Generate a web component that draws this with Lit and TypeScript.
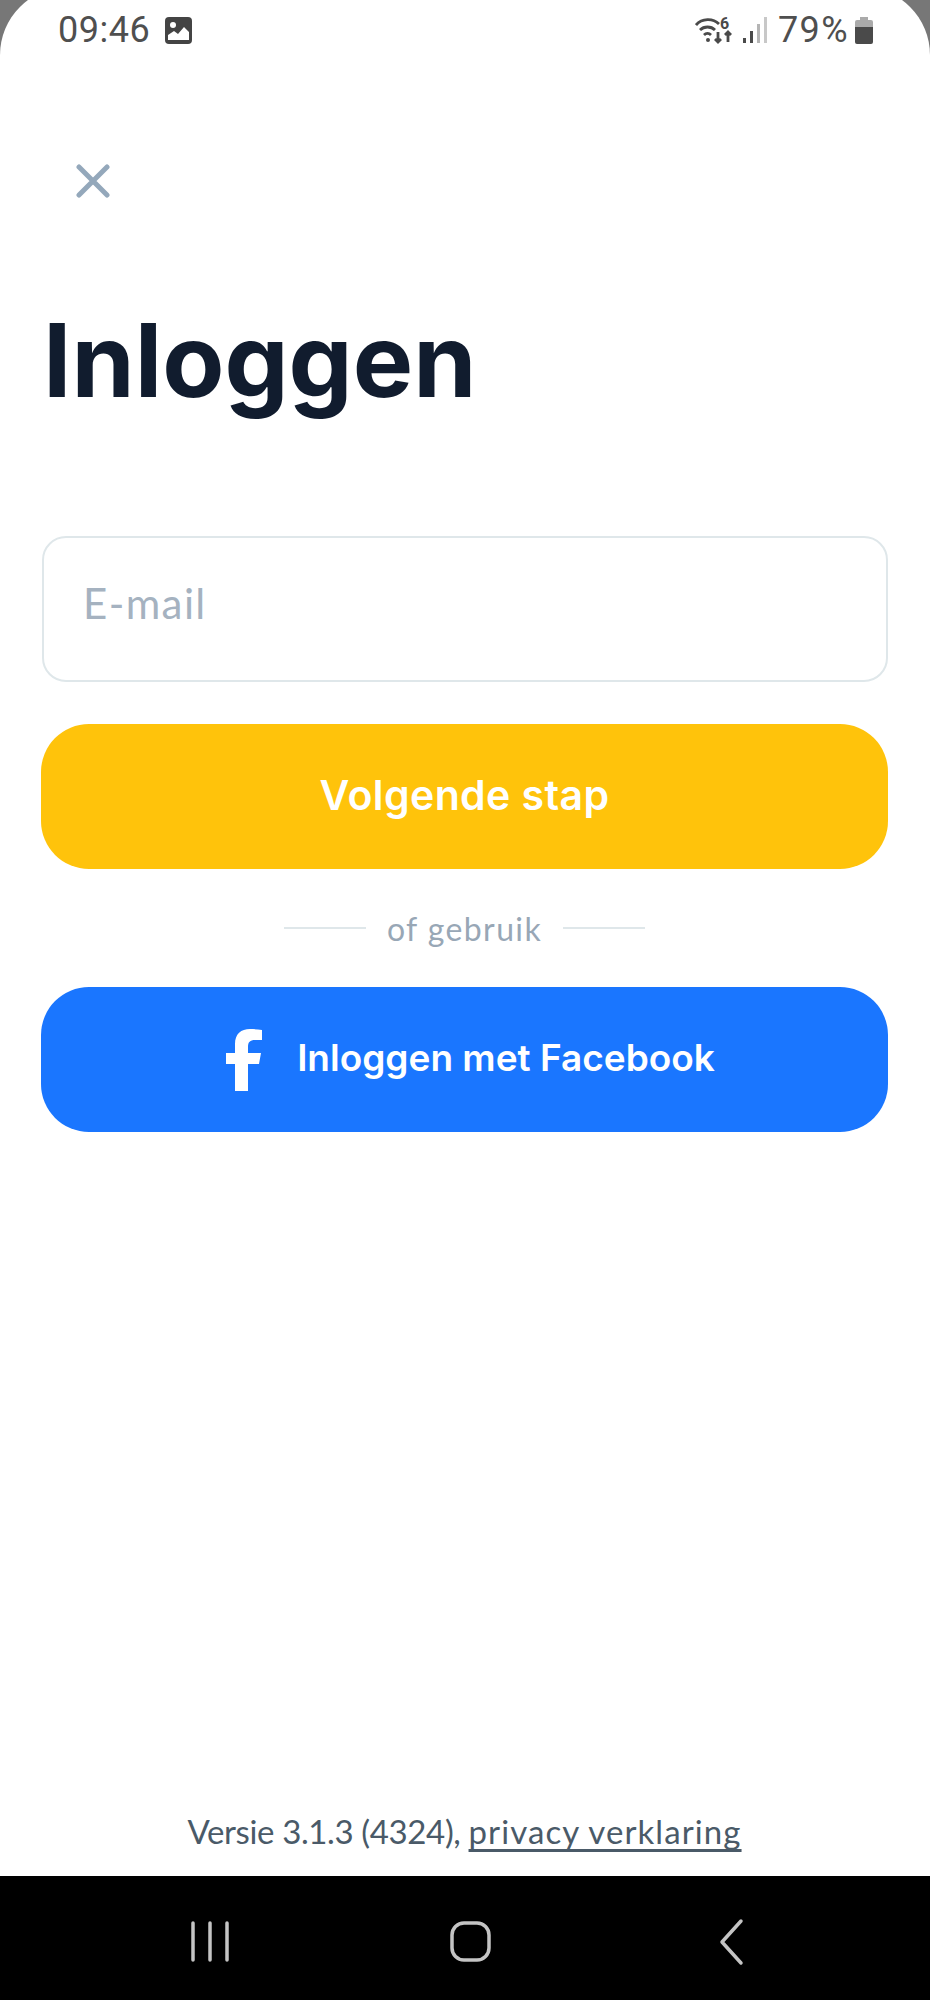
import { LitElement, css, html } from 'lit';
import { customElement } from 'lit/decorators.js';

@customElement('app-root')
export class AppRoot extends LitElement {
  static styles = css`
    :host {
      display: block;
      width: 930px;
      height: 2000px;
      overflow: hidden;
      background: #777;
      font-family: 'Lato', 'Liberation Sans', sans-serif;
    }

    /* the rounded screen corners start above the top edge of the capture */
    .sheet {
      display: flex;
      flex-direction: column;
      height: 1889px;
      margin-top: -13px;
      padding: 13px 42px 0 41px;
      box-sizing: border-box;
      background: #fff;
      border-radius: 68px 68px 0 0;
    }

    .status {
      display: flex;
      align-items: center;
      height: 60px;
      padding: 0 15px 0 17px;
      color: #4f4f4f;
      font-family: 'Roboto', sans-serif;
      font-size: 36px;
      letter-spacing: 1.4px;
    }
    .status .time {
      margin-right: 15px;
      letter-spacing: 0.5px;
    }
    .status .pct {
      margin: 0 6px 0 11px;
    }
    .status .wifi {
      margin: 0 8px 6px auto;
    }

    .close {
      display: block;
      margin: 104px 0 0 35px;
    }

    h1 {
      margin: 102px 0 0 2px;
      color: #111c2e;
      font-family: 'Inter', sans-serif;
      font-size: 101.5px;
      font-weight: 700;
      line-height: 120px;
    }

    .field {
      display: flex;
      align-items: center;
      height: 146px;
      margin: 116px 0 0 1px;
      padding: 0 0 12px 39px;
      box-sizing: border-box;
      border: 2px solid #dfe7ea;
      border-radius: 24px;
      color: #a5b2c0;
      font-size: 42px;
      font-weight: 400;
      letter-spacing: 1.4px;
    }

    .btn {
      display: flex;
      align-items: center;
      justify-content: center;
      height: 145px;
      border-radius: 48px;
      color: #fff;
      font-family: 'Inter', sans-serif;
      font-size: 37px;
      font-weight: 600;
    }
    .btn span {
      padding-bottom: 4px;
    }
    .btn.primary {
      margin-top: 42px;
      background: #ffc30b;
      font-size: 41px;
      letter-spacing: 0.4px;
    }
    .btn.facebook {
      gap: 35px;
      padding-left: 12px;
      background: #1a76ff;
    }

    .divider {
      display: flex;
      align-items: center;
      justify-content: center;
      gap: 21px;
      height: 118px;
      color: #98a7b6;
      font-size: 32px;
      letter-spacing: 1.4px;
    }
    .divider i {
      width: 82px;
      height: 2px;
      background: #dfe7ea;
    }

    .footer {
      margin-top: auto;
      padding-bottom: 25px;
      color: #4a5a68;
      font-size: 33px;
      letter-spacing: -0.37px;
      text-align: center;
    }
    .footer a {
      color: inherit;
      letter-spacing: 1.08px;
      text-decoration: underline;
      text-decoration-skip-ink: none;
      text-underline-offset: 5px;
    }

    .nav {
      height: 124px;
      background: #000;
    }
    .nav svg {
      display: block;
    }
  `;

  protected render() {
    return html`
      <div class="sheet">
        <div class="status">
          <span class="time">09:46</span>
          <svg width="27" height="27" viewBox="0 0 27 27">
            <rect width="27" height="27" rx="4" fill="#444" />
            <circle cx="8" cy="8" r="3" fill="#fff" />
            <path d="M3 23v-5l6-4 4 3 6-7 5 5v8z" fill="#fff" />
          </svg>
          <svg class="wifi" width="40" height="34" viewBox="0 -6 40 34" fill="none" stroke="#4a4a4a" stroke-width="2.8">
            <path d="M1 9c6-7 17-7 23-1M5 14c4-4 11-4 15 0M9 19c2-2 5-2 7 0" />
            <circle cx="13" cy="24" r="2" fill="#4a4a4a" stroke="none" />
            <text x="25" y="13" fill="#4a4a4a" stroke="none" font-size="16" font-weight="700" letter-spacing="0">6</text>
            <path d="M23 16v10m-3-3l3 3 3-3M33 26V16m-3 3l3-3 3 3" />
          </svg>
          <svg width="24" height="28" viewBox="0 0 24 28">
            <rect x="0" y="22" width="3" height="5" fill="#4a4a4a" />
            <rect x="7" y="15" width="3" height="12" fill="#4a4a4a" />
            <rect x="14" y="8" width="3" height="19" fill="#b5b5b5" />
            <rect x="21" y="1" width="3" height="26" fill="#c8c8c8" />
          </svg>
          <span class="pct">79%</span>
          <svg width="18" height="27" viewBox="0 0 18 27">
            <path d="M5 0h8v3h3a2 2 0 0 1 2 2v5H0V5a2 2 0 0 1 2-2h3z" fill="#aaa" />
            <path d="M0 10h18v15a2 2 0 0 1-2 2H2a2 2 0 0 1-2-2z" fill="#4a4a4a" />
          </svg>
        </div>

        <svg class="close" width="34" height="34" viewBox="0 0 34 34" fill="none" stroke="#94a8bb" stroke-width="5" stroke-linecap="round">
          <path d="M3 3l28 28M31 3L3 31" />
        </svg>

        <h1>Inloggen</h1>

        <div class="field">E-mail</div>
        <div class="btn primary"><span>Volgende stap</span></div>
        <div class="divider"><i></i><span>of gebruik</span><i></i></div>
        <div class="btn facebook">
          <svg width="36" height="62" viewBox="0 0 36 62">
            <path d="M9 62V35H0V24h9v-9C9 5 15 0 24 0c4 0 8 .4 12 1v10h-7c-5 0-7 2-7 7v6h13l-2 11H22v27z" fill="#fff" />
          </svg>
          <span>Inloggen met Facebook</span>
        </div>

        <div class="footer">Versie 3.1.3 (4324), <a>privacy verklaring</a></div>
      </div>

      <div class="nav">
        <svg width="930" height="124" viewBox="0 0 930 124" fill="none" stroke="#c4c4c4" stroke-width="3.5" stroke-linecap="round" stroke-linejoin="round">
          <path d="M193 47v37M210 47v37M227 47v37" />
          <rect x="452" y="47" width="37" height="37" rx="12" />
          <path d="M741 45L722 66l19 21" />
        </svg>
      </div>
    `;
  }
}
